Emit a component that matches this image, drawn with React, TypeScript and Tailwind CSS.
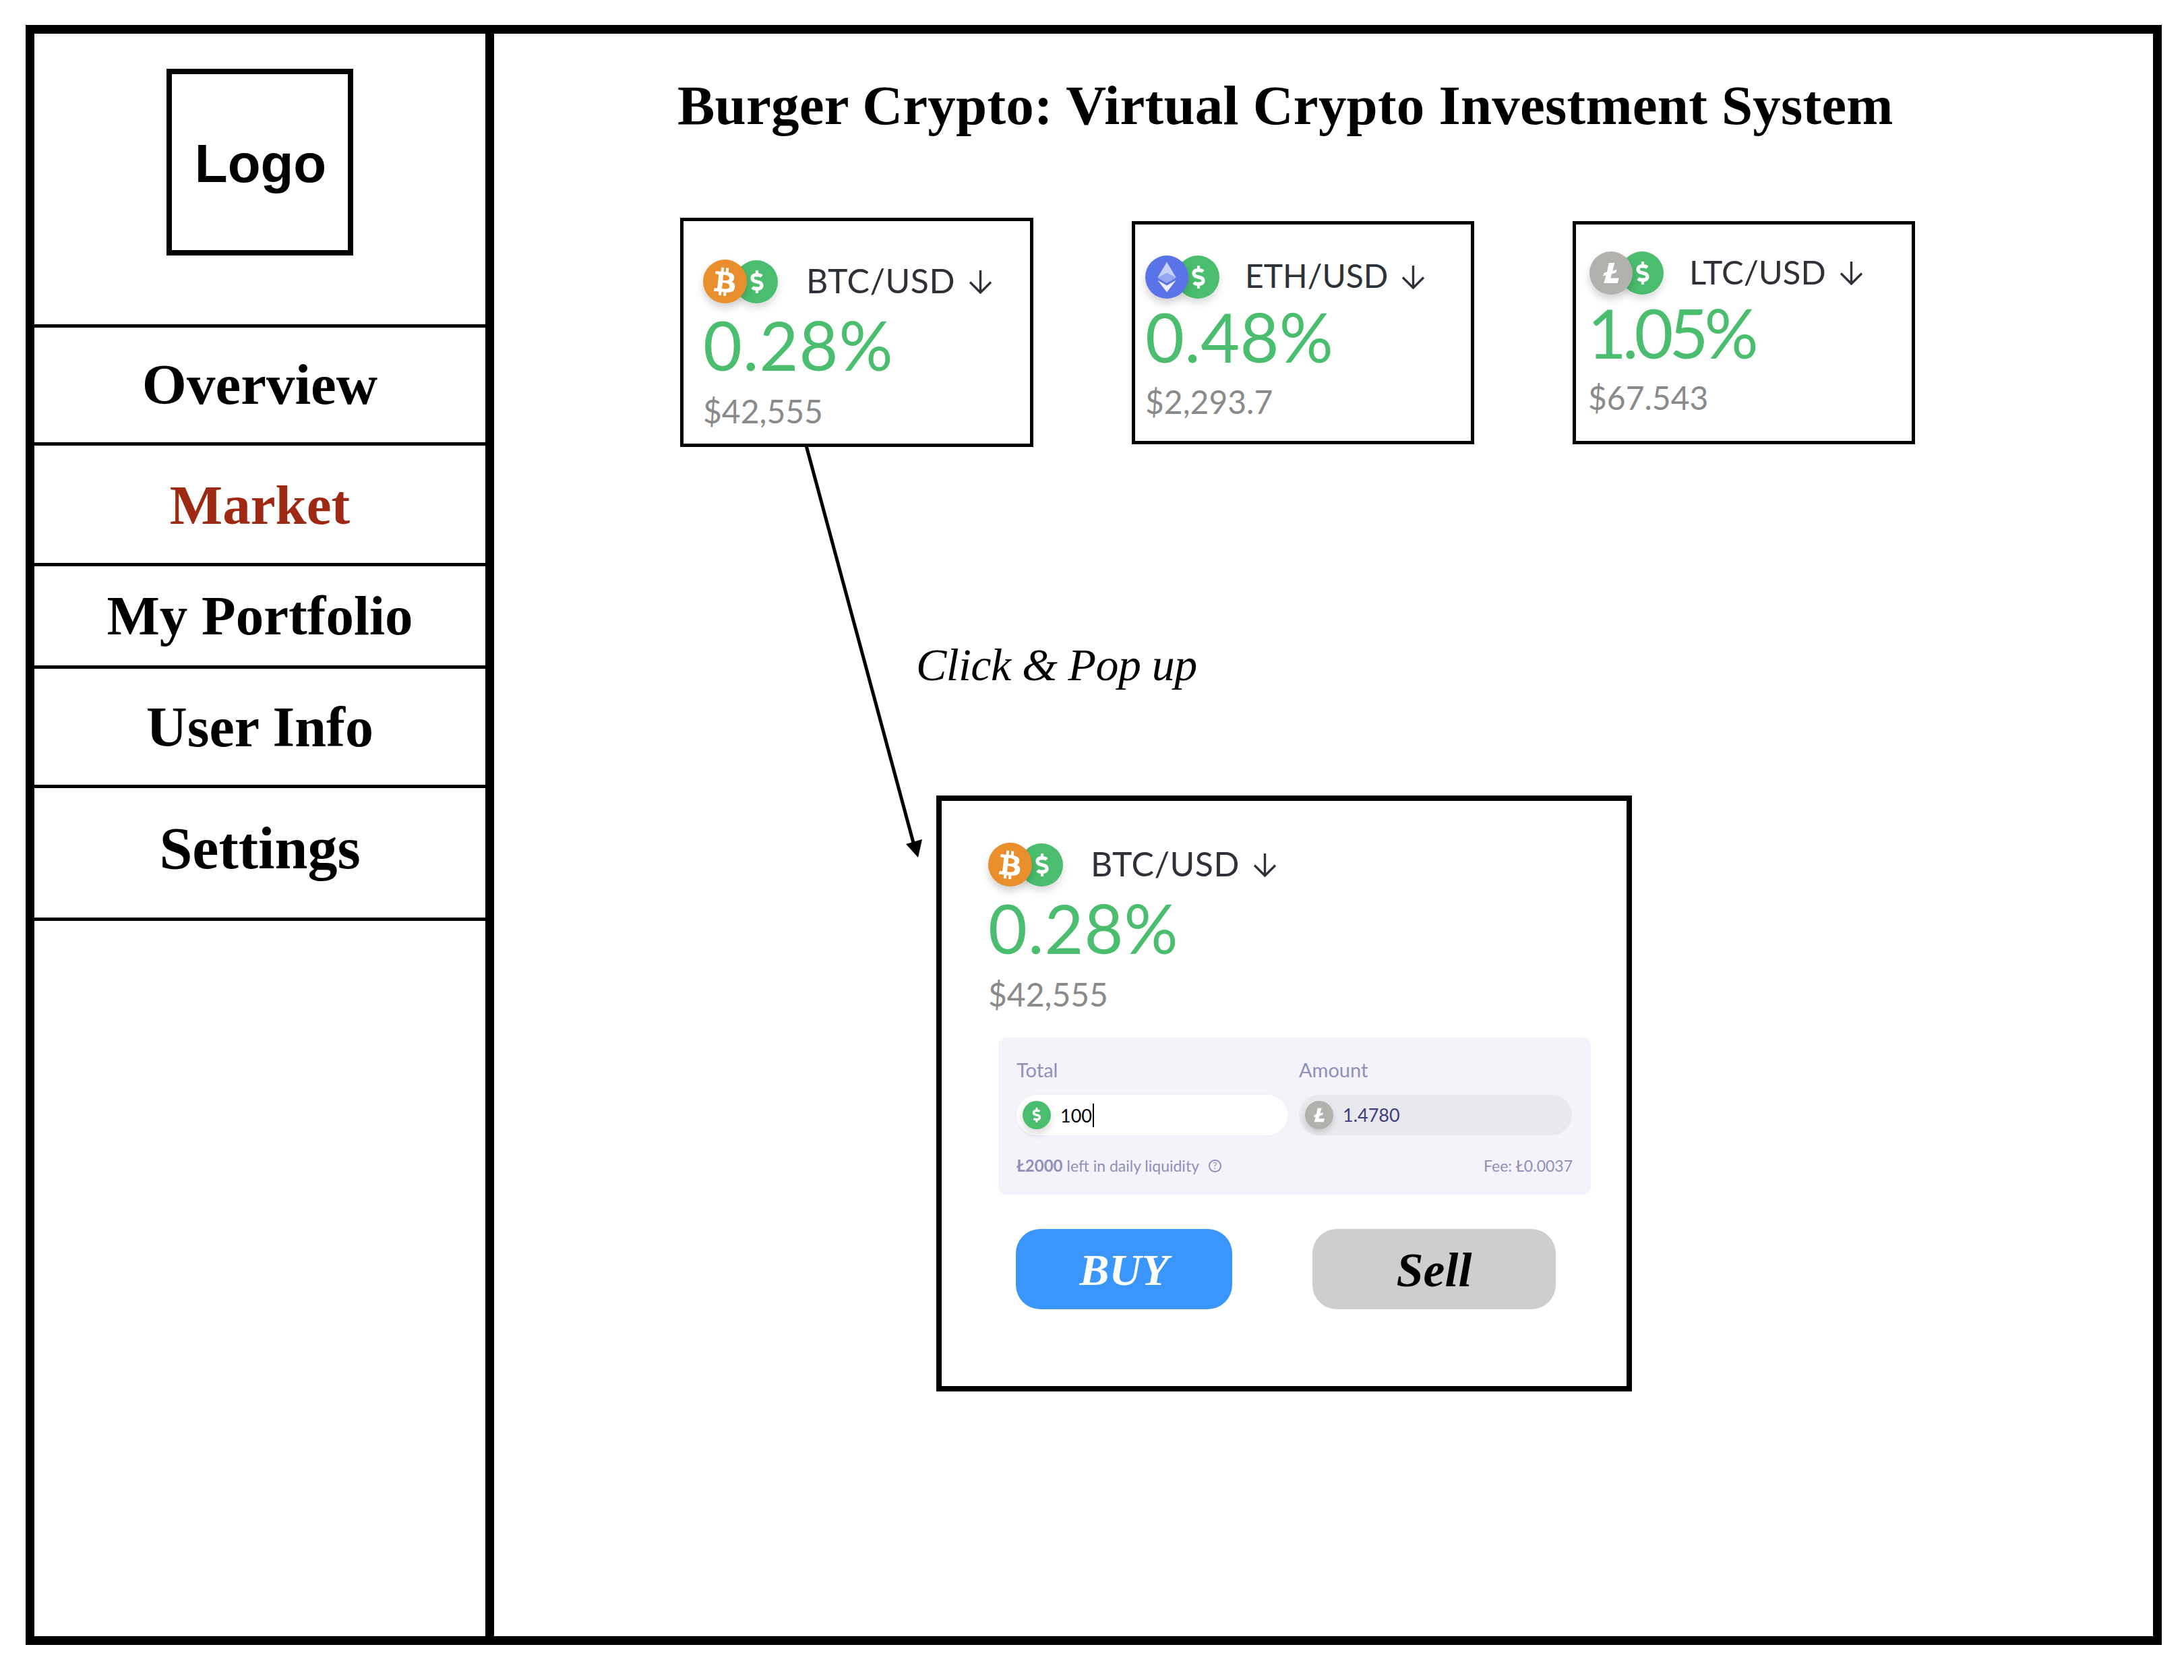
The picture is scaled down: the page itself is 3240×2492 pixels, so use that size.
import { FaBtc, FaDollarSign } from "react-icons/fa";

const sans = "font-['Lato','Liberation_Sans',sans-serif]";
const serif = "font-['Liberation_Serif',serif]";

const navItems = [
  { label: "Overview", rowClass: "h-[175px] text-[85px]", textClass: "text-black" },
  { label: "Market", rowClass: "h-[179px] pt-[2px] text-[83px]", textClass: "text-[#9f2a14]" },
  { label: "My Portfolio", rowClass: "h-[152px] text-[83px]", textClass: "text-black" },
  { label: "User Info", rowClass: "h-[177px] pt-[2px] text-[84px]", textClass: "text-black" },
  { label: "Settings", rowClass: "h-[197px] pb-[12px] text-[88px]", textClass: "text-black" },
];

const ThinArrow = ({ className }: { className: string }) => (
  <svg viewBox="0 0 35 36" fill="none" className={className}>
    <path d="M17.5 1V34M2 18.5L17.5 34L33 18.5" stroke="#2e3238" strokeWidth="3.4" />
  </svg>
);

const DollarCoin = ({ className, iconClass }: { className: string; iconClass: string }) => (
  <div className={`flex shrink-0 items-center justify-center rounded-full bg-[#4bbd6e] shadow-[0_7px_12px_rgba(0,0,0,0.14)] ${className}`}>
    <FaDollarSign className={`text-white ${iconClass}`} />
  </div>
);

const BtcCoin = ({ className }: { className: string }) => (
  <div className={`relative z-10 flex shrink-0 items-center justify-center rounded-full bg-[#e98e2c] shadow-[0_7px_12px_rgba(0,0,0,0.18)] ${className}`}>
    <FaBtc className="h-[42px] w-[33px] rotate-[6deg] text-white" />
  </div>
);

const EthCoin = ({ className }: { className: string }) => (
  <div className={`relative z-10 flex shrink-0 items-center justify-center rounded-full bg-[#5b73e8] shadow-[0_7px_12px_rgba(0,0,0,0.18)] ${className}`}>
    <svg viewBox="0 0 24 38" className="h-[50px] w-[30px]">
      <path d="M12 1L1 19.5L12 26L23 19.5Z" fill="#c9d1f8" />
      <path d="M12 14L1 19.5L12 26L23 19.5Z" fill="#97a6f0" />
      <path d="M12 29L1 22.5L12 37L23 22.5Z" fill="#eef0fd" />
    </svg>
  </div>
);

const LtcMark = ({ className }: { className: string }) => (
  <svg viewBox="0 0 24 30" className={className}>
    <path d="M9 1H17L14 12L20 10L19 14.5L12.8 16.5L11.4 22H23L21 29H2L5 18L1 19.3L2 15L6.2 13.6Z" fill="#fff" />
  </svg>
);

const LtcCoin = ({ className }: { className: string }) => (
  <div className={`relative z-10 flex shrink-0 items-center justify-center rounded-full bg-[#b3b1ae] shadow-[0_7px_12px_rgba(0,0,0,0.18)] ${className}`}>
    <LtcMark className="h-[32px] w-[26px]" />
  </div>
);

const TickerBody = ({
  coin,
  pair,
  pct,
  price,
  pairClass,
  pctClass,
  priceClass,
}: {
  coin: React.ReactNode;
  pair: string;
  pct: string;
  price: string;
  pairClass: string;
  pctClass: string;
  priceClass: string;
}) => (
  <div className={`flex flex-col ${sans}`}>
    <div className="flex h-[65px] items-center">
      {coin}
      <DollarCoin className="-ml-[18px] h-[64px] w-[64px]" iconClass="h-[34px] w-[22px] ml-[2px]" />
      <span className={`pb-[3px] leading-none text-[#2e3238] ${pairClass}`}>{pair}</span>
      <ThinArrow className="ml-[20px] h-[36px] w-[35px]" />
    </div>
    <div className={`text-[100px] leading-[98px] text-[#4bbd6e] ${pctClass}`}>{pct}</div>
    <div className={`text-[48px] leading-[48px] text-[#8a8a8a] ${priceClass}`}>{price}</div>
  </div>
);

const Field = ({
  label,
  className,
  children,
}: {
  label: string;
  className: string;
  children: React.ReactNode;
}) => (
  <div className="flex flex-col">
    <div className="mb-[19px] text-[29px] leading-[36px] text-[#8f8fb9]">{label}</div>
    <div className={`flex h-[60px] items-center rounded-full pl-[9px] ${className}`}>{children}</div>
  </div>
);

export default function App() {
  return (
    <div className="h-[2492px] w-[3240px] bg-white pl-[38px] pt-[37px]">
      <div className="flex h-[2403px] w-[3169px] border-[13px] border-black">
        {/* sidebar */}
        <aside className="flex w-[682px] shrink-0 flex-col border-r-[13px] border-black">
          <div className="flex h-[436px] justify-center border-b-[5px] border-black pt-[52px]">
            <div className="flex h-[277px] w-[277px] items-center justify-center border-[8px] border-black pl-[2px] pt-[4px] font-['Liberation_Sans',sans-serif] text-[80px] font-bold text-black">
              Logo
            </div>
          </div>
          {navItems.map((item) => (
            <div
              key={item.label}
              className={`flex items-center justify-center border-b-[5px] border-black ${serif} font-bold ${item.rowClass} ${item.textClass}`}
            >
              {item.label}
            </div>
          ))}
        </aside>

        {/* main */}
        <main className="relative min-w-0 flex-1">
          <h1 className={`pl-[272px] pt-[64px] ${serif} text-[83px] font-bold leading-[84px] tracking-[0.2px] text-black`}>
            Burger Crypto: Virtual Crypto Investment System
          </h1>

          <div className="ml-[276px] mt-[125px] flex items-start">
            <div className="h-[340px] w-[524px] shrink-0 border-[5px] border-black pl-[29px] pt-[57px]">
              <TickerBody
                coin={<BtcCoin className="h-[65px] w-[65px]" />}
                pair="BTC/USD"
                pct="0.28%"
                price="$42,555"
                pairClass="ml-[42px] text-[50px] tracking-[0.5px]"
                pctClass="mt-[12px] tracking-[1px]"
                priceClass="mt-[26px]"
              />
            </div>
            <div className="ml-[146px] mt-[5px] h-[331px] w-[508px] shrink-0 border-[5px] border-black pl-[15px] pt-[45px]">
              <TickerBody
                coin={<EthCoin className="h-[64px] w-[64px]" />}
                pair="ETH/USD"
                pct="0.48%"
                price="$2,293.7"
                pairClass="ml-[38px] text-[48px]"
                pctClass="mt-[7px] tracking-[0.3px]"
                priceClass="mt-[24px]"
              />
            </div>
            <div className="ml-[146px] mt-[5px] h-[331px] w-[508px] shrink-0 border-[5px] border-black pl-[20px] pt-[39px]">
              <TickerBody
                coin={<LtcCoin className="h-[64px] w-[64px]" />}
                pair="LTC/USD"
                pct="1.05%"
                price="$67.543"
                pairClass="ml-[38px] text-[49px]"
                pctClass="mt-[7px] -ml-[3px] tracking-[-6px]"
                priceClass="mt-[24px] -ml-[2px]"
              />
            </div>
          </div>

          <div className={`ml-[626px] mt-[287px] ${serif} text-[68px] italic leading-[72px] tracking-[-0.6px] text-black`}>
            Click &amp; Pop up
          </div>

          {/* popup */}
          <div className="ml-[656px] mt-[158px] h-[884px] w-[1032px] border-[8px] border-black pl-[69px] pt-[62px]">
            <TickerBody
              coin={<BtcCoin className="h-[65px] w-[65px]" />}
              pair="BTC/USD"
              pct="0.28%"
              price="$42,555"
              pairClass="ml-[41px] text-[50px] tracking-[0.5px]"
              pctClass="mt-[12px] tracking-[1px]"
              priceClass="mt-[26px]"
            />

            <div className={`ml-[15px] mt-[40px] h-[233px] w-[879px] rounded-[12px] bg-[#f3f3f9] px-[27px] pt-[30px] ${sans}`}>
              <div className="grid grid-cols-[403px_405px] gap-x-[16px]">
                <Field label="Total" className="bg-white shadow-[0_0_3px_rgba(0,0,0,0.06)]">
                  <DollarCoin className="h-[42px] w-[42px]" iconClass="h-[22px] w-[14px]" />
                  <span className="ml-[14px] border-r-2 border-black pr-px text-[27px] leading-[35px] text-black">100</span>
                </Field>
                <Field label="Amount" className="bg-[#e8e9ed]">
                  <div className="flex h-[42px] w-[42px] items-center justify-center rounded-full bg-[#b3b1ae] shadow-[0_5px_8px_rgba(0,0,0,0.14)]">
                    <LtcMark className="h-[22px] w-[18px]" />
                  </div>
                  <span className="ml-[14px] text-[27px] text-[#3f3f7f]">1.4780</span>
                </Field>
              </div>
              <div className="mt-[30px] flex items-center justify-between text-[23px] leading-[30px] text-[#8f8fb9]">
                <div className="flex items-center">
                  <span className="text-[24px] font-bold">Ł2000</span>
                  <span className="ml-[6px]">left in daily liquidity</span>
                  <span className="ml-[14px] flex h-[19px] w-[19px] items-center justify-center rounded-full border-2 border-[#8f8fb9] text-[14px] leading-none">?</span>
                </div>
                <span>Fee: Ł0.0037</span>
              </div>
            </div>

            <div className={`ml-[41px] mt-[51px] flex gap-[119px] ${serif} font-bold italic`}>
              <button className="flex h-[119px] w-[321px] items-center justify-center rounded-[36px] bg-[#3a95fd] pt-[2px] text-[66px] text-white">BUY</button>
              <button className="flex h-[119px] w-[361px] items-center justify-center rounded-[36px] bg-[#cecece] pt-[2px] text-[72px] text-black">Sell</button>
            </div>
          </div>

          {/* arrow from the first ticker down to the popup */}
          <svg className="pointer-events-none absolute left-[450px] top-[600px] h-[640px] w-[200px]" viewBox="0 0 200 640" fill="none">
            <line x1="13" y1="11" x2="172" y2="600" stroke="#000" strokeWidth="5" />
            <polygon points="179,622 161,602 185,595" fill="#000" />
          </svg>
        </main>
      </div>
    </div>
  );
}
